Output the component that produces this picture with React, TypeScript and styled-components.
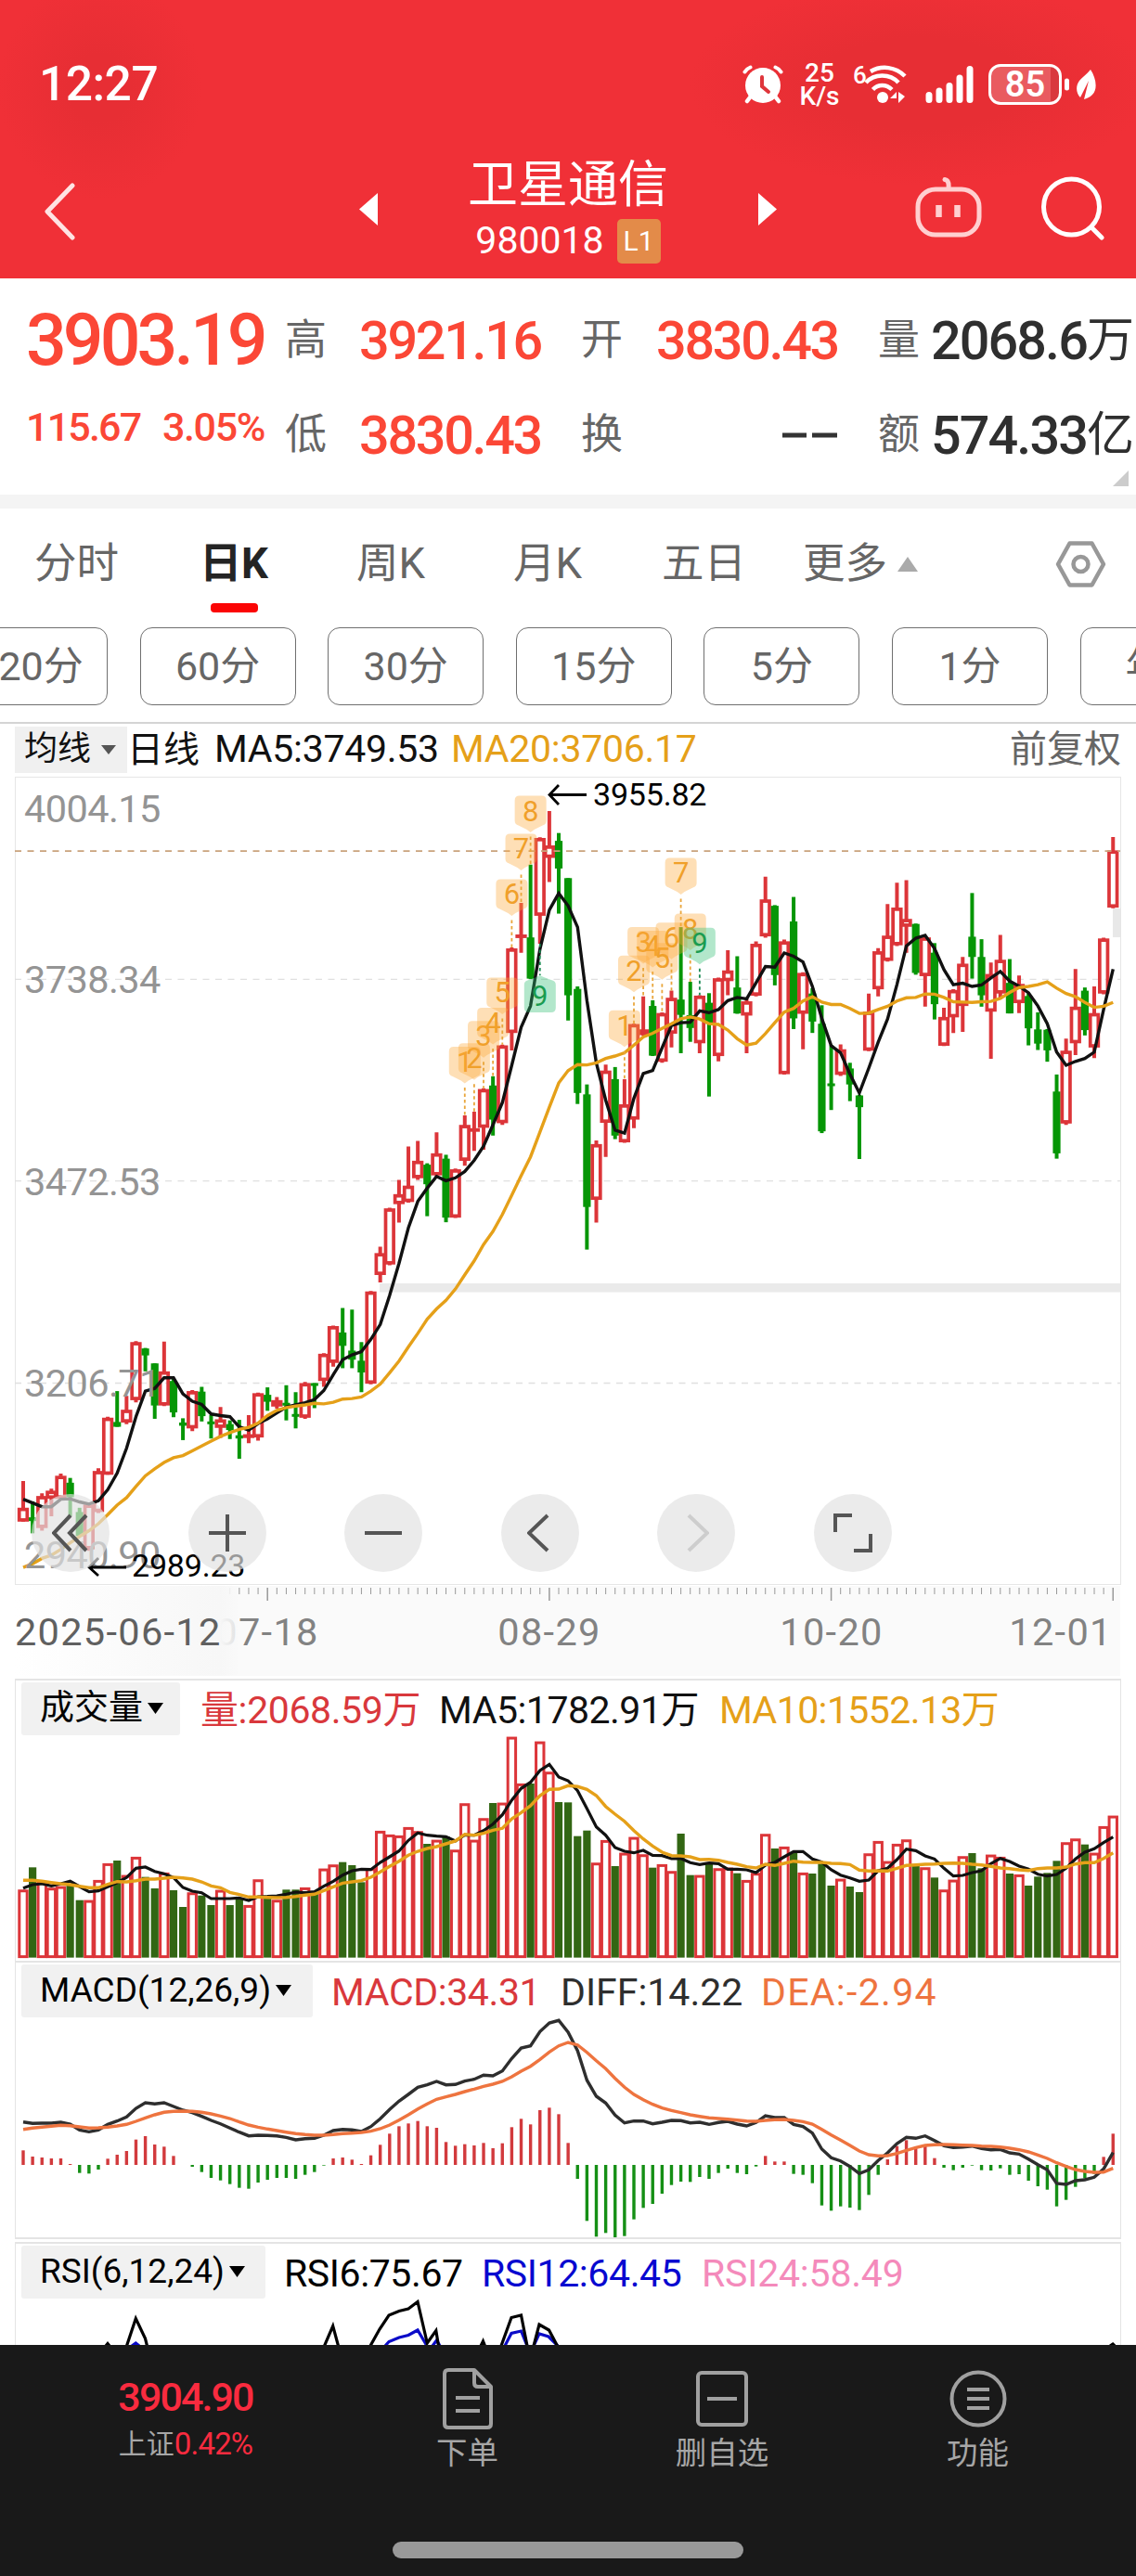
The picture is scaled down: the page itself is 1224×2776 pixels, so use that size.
import React from "react";
import styled, { createGlobalStyle, css } from "styled-components";

const sans = `Roboto, "Noto Sans CJK SC", sans-serif`;

const GlobalStyle = createGlobalStyle`
  body { margin: 0; background: #fff; font-family: ${sans}; }
  * { box-sizing: border-box; }
  svg { display: block; }
`;

/* ---------- series data ---------- */

const START_X = 25;
const STEP = 10.123;
const xAt = (i: number) => START_X + STEP * i;

type Candle = { up: boolean; high: number; top: number; bottom: number; low: number };
const TOP = 820;

// Rows are "r|g high top bottom low", measured from TOP in steps of 1/unit px.
const readCandles = (text: string, unit: number): Candle[] =>
  text
    .trim()
    .split(",")
    .map((row) => {
      const [c, ...n] = row.trim().split(" ");
      const [high, top, bottom, low] = n.map((v) => TOP + Number(v) / unit);
      return { up: c === "r", high, top, bottom, low };
    });

const readLine = (text: string, unit: number, top = TOP) =>
  text.trim().split(/\s+/).map((v) => top + Number(v) / unit);

const candles: Candle[] = [
  ...readCandles(
    `r 1352 1402 1428 1428,g 1390 1420 1427 1450,r 1375 1380 1440 1445,r 1366 1370 1385 1418,r 1338 1342 1385 1386,g 1346 1355 1382 1418,g 1402 1410 1455 1456,r 1394 1396 1480 1483,r 1328 1333 1410 1412,r 1231 1233 1340 1340,g 1183 1241 1250 1250,r 1192 1218 1242 1245,r 1089 1091 1200 1204,g 1102 1103 1116 1146,g 1131 1131 1210 1235,r 1090 1146 1210 1211,g 1160 1164 1223 1232,g 1234 1242 1248 1275,r 1181 1183 1253 1258,g 1175 1184 1230 1240,g 1228 1240 1245 1272,r 1213 1236 1252 1271,g 1238 1245 1256 1273,g 1237 1266 1272 1310,r 1228 1264 1271 1281,r 1186 1187 1270 1276,g 1176 1190 1203 1220,r 1194 1200 1212 1216,g 1172 1205 1210 1238,g 1185 1226 1231 1253,r 1166 1168 1233 1235,g 1168 1168 1173 1215,r 1112 1113 1164 1175,r 1060 1061 1130 1137,g 1027 1073 1098 1140,g 1030 1107 1124 1140,g 1091 1126 1148 1185,r 995 996 1169 1170,r 912 924 965 979`,
    1.742
  ),
  ...readCandles(
    `r 1258 1260 1418 1420,r 1180 1220 1248 1300,r 1086 1196 1242 1244,r 1070 1126 1175 1180,g 1133 1137 1192 1282,r 1046 1105 1167 1172,g 1109 1120 1286 1299,r 1148 1150 1286 1287,r 998 1025 1126 1140,r 988 1036 1042 1098,r 922 924 1033 1095,g 888 914 1010 1055,r 799 801 1020 1025,r 525 528 766 815,r 400 490 497 540,g 292 497 613 614,r 215 217 436 515,r 141 238 273 341,g 203 225 303 430,g 330 330 660 731,g 635 642 935 966,g 911 939 1256 1376,r 1069 1079 1236 1300,r 855 872 1019 1115,g 862 896 1055 1065,r 896 967 1074 1075,r 740 741 1010 1034,r 663 756 772 774,g 674 690 830 831,r 708 710 847 850,r 647 667 768 807,g 468 672 715 823,g 622 716 752 791,r 660 661 795 823,g 654 681 740 945,r 610 612 831 846,r 533 590 620 660,g 550 638 711 712,r 670 677 717 823,r 508 515 661 663,r 326 390 494 498,g 406 408 603 632,r 503 508 882 883,g 383 452 725 755,r 595 597 712 812,g 640 655 734 766,g 688 740 1043 1048,g 800 908 915 983,r 798 812 884 887,g 850 866 911 958,g 940 942 975 1121,r 655 706 816 817,r 527 536 643 663,r 403 492 563 565,r 343 413 519 521,r 336 445 467 540,g 458 459 597 602,r 495 497 606 692,g 513 540 685 728,r 695 721 802 803,r 643 645 722 766,r 552 571 690 763,g 372 495 552 613,g 502 552 660 692,r 568 600 706 839,r 490 560 655 670,g 558 625 711 711,r 604 628 682 710,g 655 662 753 801,g 708 756 796 814,g 755 757 815 847,g 883 931 1105 1120,r 782 816 1021 1025,r 586 692 795 828,g 638 647 758 773,r 635 710 807 837,r 498 500 655 657,r 214 252 413 415`,
    2.613
  ),
];

const ma5 = [
  ...readLine(
    `1386 1393 1400 1400 1386 1385 1391 1395 1389 1368 1337 1290 1231 1183 1178 1158 1158 1188 1202 1208 1226 1229 1231 1250 1256 1244 1235 1224 1213 1209 1205 1199 1182 1152 1124 1115 1109 1086 1058`,
    1.742
  ),
  ...readLine(
    `1505 1415 1315 1240 1203 1170 1182 1174 1156 1125 1085 1025 962 857 750 690 530 420 373 408 468 675 850 955 1040 1048 950 880 872 808 745 737 736 704 709 700 675 666 670 625 579 581 541 550 566 635 725 802 822 882 935 865 792 727 630 521 499 491 528 588 630 626 635 631 611 593 620 634 653 690 740 820 857 846 838 820 700 586`,
    2.613
  ),
];

const ma20 = [
  ...readLine(
    `1514 1507 1497 1491 1480 1468 1456 1445 1432 1415 1397 1383 1362 1342 1329 1317 1308 1304 1295 1286 1277 1268 1261 1255 1251 1243 1229 1219 1214 1211 1209 1206 1207 1204 1198 1197 1194 1183 1170`,
    1.742
  ),
  ...readLine(
    `1723 1690 1650 1612 1572 1543 1519 1487 1447 1408 1362 1325 1277 1223 1168 1115 1045 975 907 872 855 856 850 838 831 822 800 777 767 753 740 726 721 727 740 742 758 782 800 795 768 737 707 697 676 664 679 686 686 697 711 710 700 691 676 667 666 656 657 666 678 679 680 678 677 669 652 638 635 630 622 640 655 664 680 694 691 680`,
    2.613
  ),
];

const volume = readLine(
  `709 637 683 703 698 695 743 743 678 624 615 662 603 668 705 654 711 765 718 728 759 710 759 738 759 676 735 742 709 709 702 720 641 628 620 630 685 640 519 531 534 507 520 561 548 537 580 430 548 478 429 428 215 366 366 230 328 426 427 536 518 622 549 633 590 539 595 638 627 649 528 662 662 622 640 638 656 678 655 529 576 570 590 654 657 625 696 674 699 717 592 552 617 561 547 630 637 670 709 677 601 591 640 596 603 657 660 696 667 655 616 556 544 563 590 504 470`,
  3,
  1800
);
const volumeMa5 = readLine(
  `704 693 690 697 690 682 699 716 713 700 686 670 640 636 650 658 670 702 714 719 738 738 738 736 744 732 731 729 724 717 719 716 698 682 662 648 643 644 621 603 584 550 526 533 536 538 552 532 533 518 497 467 420 382 362 324 304 345 357 389 447 506 533 573 585 590 582 598 599 609 608 622 628 623 625 643 643 645 654 630 621 603 586 586 610 620 645 662 671 682 678 648 640 612 578 583 600 610 640 665 663 654 648 625 608 618 633 643 659 665 660 640 610 588 577 557 539`,
  3,
  1800
);
const volumeMa10 = readLine(
  `679 679 682 686 690 693 698 703 703 692 683 684 680 675 675 672 669 671 675 684 697 703 718 725 733 733 734 735 734 731 727 724 712 700 688 684 680 669 652 634 617 598 585 576 570 561 552 530 533 527 517 511 480 460 438 405 385 384 373 376 385 405 440 465 488 518 545 568 588 599 600 603 612 611 614 621 627 635 639 627 631 624 617 620 621 621 624 625 628 646 649 648 649 640 631 629 627 626 624 623 624 627 629 634 639 641 645 647 641 639 639 636 626 622 622 608 590`,
  3,
  1800
);

const macd = readLine(
  `622 642 645 648 648 666 695 697 684 649 636 624 587 576 603 610 640 669 675 692 711 719 731 743 746 726 717 711 711 714 701 692 671 648 645 652 666 638 604 568 544 535 527 544 549 595 607 602 606 598 615 599 547 520 538 492 484 505 598 714 850 901 889 908 899 845 808 795 762 734 723 724 708 714 695 681 695 699 674 640 658 658 698 701 728 800 817 803 807 815 766 701 651 608 589 615 607 647 678 686 678 671 686 687 680 701 699 720 738 749 803 782 740 713 698 643 568`,
  3,
  2110
);
const diff = readLine(
  `530 535 534 534 531 537 556 562 556 538 527 514 486 468 472 468 480 492 500 512 525 536 550 563 575 573 574 575 580 588 584 583 573 558 554 556 561 545 520 490 463 441 418 410 399 410 409 398 392 379 381 365 325 291 284 238 210 202 240 300 395 447 469 508 533 527 527 536 531 525 526 533 531 538 532 528 537 543 532 510 516 516 538 545 566 618 646 656 674 697 685 655 630 600 580 583 575 590 607 613 611 608 616 620 619 630 634 650 668 685 729 732 720 717 709 682 629`,
  3,
  2110
);
const dea = readLine(
  `554 550 547 544 541 542 546 550 549 547 543 538 528 517 507 499 496 495 496 499 504 511 519 530 540 547 553 558 563 568 571 573 573 571 568 566 564 560 552 540 524 507 488 472 457 449 441 432 424 415 408 399 384 366 350 328 304 284 273 281 305 332 358 389 418 441 458 473 485 493 500 507 512 517 519 521 524 527 528 525 523 522 525 529 537 554 572 589 606 624 636 640 639 632 622 613 606 604 603 604 605 606 608 609 611 615 620 627 637 648 662 674 684 690 693 692 680`,
  3,
  2110
);

const toPoints = (ys: number[]) => ys.map((y, i) => `${xAt(i).toFixed(1)},${y.toFixed(1)}`).join(" ");

/* ---------- shared pieces ---------- */

const Screen = styled.main`
  width: 1224px;
  height: 2776px;
  display: flex;
  flex-direction: column;
  overflow: hidden;
  background: #fff;
`;

type TextProps = { $size: number; $color?: string; $weight?: number; $track?: number; $width?: number };
const Label = styled.span<TextProps>`
  flex: none;
  font-size: ${(p) => p.$size}px;
  line-height: 1.2;
  font-weight: ${(p) => p.$weight ?? 400};
  color: ${(p) => p.$color ?? "inherit"};
  letter-spacing: ${(p) => p.$track ?? 0}px;
  white-space: nowrap;
  ${(p) => p.$width !== undefined && css`width: ${p.$width}px;`}
`;

/* ---------- header ---------- */

const Header = styled.header`
  flex: none;
  height: 300px;
  color: #fff;
  background: radial-gradient(ellipse 110px 120px at 108px 95px, #e72e34 30%, rgba(231, 46, 52, 0) 100%),
    radial-gradient(ellipse 250px 110px at 992px 90px, #e72e34 45%, rgba(231, 46, 52, 0) 100%), #f03037;
`;

const StatusBar = styled.div`
  height: 150px;
  padding: 31px 43px 0 42px;
  display: flex;
  align-items: center;
  justify-content: space-between;
`;

const StatusIcons = styled.div`
  display: flex;
  align-items: center;
`;

const Speed = styled.div`
  width: 44px;
  margin: 0 15px 0 17px;
  display: flex;
  flex-direction: column;
  align-items: center;
  font-size: 28px;
  line-height: 25px;
  font-weight: 500;
`;

const BatteryBody = styled.div`
  width: 79px;
  height: 44px;
  margin-left: 15px;
  border: 3.5px solid #fff;
  border-radius: 13px;
  display: flex;
  align-items: center;
  justify-content: center;
  background: linear-gradient(90deg, #e95b60 88%, #d9383e 88%);
  font-size: 38px;
  line-height: 38px;
  font-weight: 600;
`;

const TitleBar = styled.div`
  height: 150px;
  display: grid;
  grid-template-columns: 387px 20px 410px 20px 149px 72px 64px 70px;
  align-items: center;
`;

const BackSlot = styled.div`
  padding: 6px 0 0 46px;
`;

const TitleStack = styled.div`
  display: flex;
  flex-direction: column;
  align-items: center;
  padding-top: 6px;
`;

const TitleLine = styled.div<{ $drop?: number }>`
  height: 62px;
  padding-top: ${(p) => p.$drop ?? 0}px;
  display: flex;
  align-items: center;
  gap: 14px;
`;

const LevelBadge = styled.span`
  width: 47px;
  height: 48px;
  border-radius: 5px;
  background: #e38b49;
  font-size: 30px;
  line-height: 48px;
  text-align: center;
`;

const AlarmIcon = () => (
  <svg width="44" height="42" viewBox="0 0 44 42" fill="none" stroke="#fff" strokeLinecap="round">
    <path d="M2.5 7.5Q4.5 4 8.500 2.500M41.500 7.500Q39.500 4 35.500 2.500" strokeWidth="4" />
    <path d="M8 35L5 39M36 35L39 39" strokeWidth="4.500" />
    <circle cx="22" cy="22" r="19" fill="#fff" stroke="none" />
    <path d="M21 13V23L28 29" stroke="#df353b" strokeWidth="4" />
  </svg>
);

const WifiIcon = () => (
  <svg width="57" height="46" viewBox="0 0 57 46" fill="none" stroke="#fff" strokeWidth="4.500">
    <text x="-1" y="22" fontSize="26" fontWeight="500" fill="#fff" stroke="none">6</text>
    <path d="M18 9C30 2 45 4 55 14" />
    <path d="M13 21C22 11 39 11 48 21" />
    <path d="M20.500 28.500C26 22.500 35 22.500 41 28.500" />
    <circle cx="31" cy="37" r="6" fill="#fff" stroke="none" />
    <path d="M39 38H46V43V31L39 38ZM48 31V43L55 36Z" fill="#fff" stroke="none" />
  </svg>
);

const SignalIcon = () => (
  <svg width="53" height="42" viewBox="0 0 53 42" stroke="#fff" strokeWidth="7" strokeLinecap="round">
    <path d="M4 32.500V37.500M15 28V37.500M26 22.500V37.500M37 14V37.500M48 4.500V37.500" />
  </svg>
);

const IconPair = styled.div`
  display: flex;
  align-items: center;
  gap: 20px;
`;

const LeafIcon = () => (
  <svg width="22" height="34" viewBox="0 0 22 34">
    <path d="M16 1C22 10 24 22 18 28C15 31 12 32 9 33L14 13L5 31C0 26 0 18 4 13C7 9 12 6 16 1Z" fill="#fff" />
  </svg>
);

const Triangle = ({ w, h, d, fill }: { w: number; h: number; d: "left" | "right" | "up" | "down"; fill: string }) => {
  const shapes = {
    left: `M${w} 0V${h}L0 ${h / 2}Z`,
    right: `M0 0V${h}L${w} ${h / 2}Z`,
    up: `M0 ${h}H${w}L${w / 2} 0Z`,
    down: `M0 0H${w}L${w / 2} ${h}Z`,
  };
  return (
    <svg width={w} height={h}>
      <path d={shapes[d]} fill={fill} />
    </svg>
  );
};

/* ---------- quote ---------- */

const Quote = styled.section`
  flex: none;
  height: 233px;
  padding: 2px 0 0 28px;
  display: grid;
  grid-template-columns: 279px 80px 239px 81px 239px 57px 1fr;
  grid-template-rows: 130px 74px 27px;
  align-items: center;
`;

const Change = styled.div`
  display: flex;
  margin-bottom: 16px;
`;

const Amount = styled.div`
  display: flex;
  align-items: center;
`;

const RightValue = styled.div`
  width: 196px;
`;

const Corner = styled.div`
  grid-column: 7;
  padding: 0 0 8px 196px;
`;

const Strip = styled.div`
  flex: none;
  height: 15px;
  background: #f4f4f4;
`;

/* ---------- tabs ---------- */

const Tabs = styled.nav`
  flex: none;
  height: 120px;
  padding-left: 37px;
  display: grid;
  grid-template-columns: 178px 169px 169px 160px 152px 272px 57px;
`;

const Tab = styled.div<{ $active?: boolean }>`
  position: relative;
  display: flex;
  align-items: center;
  gap: 11px;
  font-size: 45.500px;
  line-height: 54px;
  white-space: nowrap;
  font-weight: ${(p) => (p.$active ? 700 : 400)};
  color: ${(p) => (p.$active ? "#242424" : "#666")};
  ${(p) =>
    p.$active &&
    css`
      letter-spacing: -0.5px;
      &::after {
        content: "";
        position: absolute;
        left: 12px;
        top: 102px;
        width: 51px;
        height: 10px;
        border-radius: 4px;
        background: #fb0505;
      }
    `}
`;

const Periods = styled.div`
  flex: none;
  height: 112px;
  padding-top: 8px;
  border-bottom: 2px solid #d4d4d4;
  display: flex;
  gap: 34.600px;
  overflow: hidden;
`;

const Pill = styled.div`
  flex: none;
  width: 168px;
  height: 84px;
  border: 1.500px solid #6f6f6f;
  border-radius: 13px;
  display: flex;
  align-items: center;
  justify-content: center;
  font-size: 43px;
  line-height: 52px;
  color: #666;
  &:first-child {
    margin-left: -52px;
  }
`;

/* ---------- charts ---------- */

const MaLegend = styled.div`
  flex: none;
  height: 57px;
  padding: 3px 16px 4px 16px;
  display: flex;
  align-items: center;
`;

const MaPicker = styled.button`
  width: 121px;
  height: 50px;
  padding: 0 0 0 10px;
  border: 0;
  background: #f0f0f0;
  display: flex;
  align-items: center;
  gap: 11px;
  font-family: inherit;
`;

const Push = styled.div`
  display: flex;
  margin-left: auto;
`;

const ChartArea = styled.div`
  position: relative;
  flex: none;
  height: 872px;
`;

const Controls = styled.div`
  position: absolute;
  left: 34px;
  top: 773px;
  display: flex;
  gap: 84.500px;
`;

const RoundButton = styled.button`
  width: 84px;
  height: 84px;
  padding: 0;
  border: 0;
  border-radius: 50%;
  background: rgba(226, 226, 226, 0.68);
  display: flex;
  align-items: center;
  justify-content: center;
`;

const Axis = styled.div`
  flex: none;
  height: 100px;
`;

const Panel = styled.section<{ $height: number }>`
  flex: none;
  height: ${(p) => p.$height}px;
  margin: 0 16px;
  border: 1px solid #e4e4e4;
  border-top-width: 2px;
  border-bottom-width: 0;
`;

const PanelLegend = styled.div`
  height: 60px;
  padding: 2px 0 0 6px;
  display: flex;
  align-items: flex-start;
`;

const IndicatorPicker = styled.button<{ $width: number; $space: number }>`
  flex: none;
  width: ${(p) => p.$width}px;
  height: 57px;
  margin-right: ${(p) => p.$space}px;
  padding: 0 0 1px 20px;
  border: 0;
  border-radius: 3px;
  background: #f1f1f1;
  display: flex;
  align-items: center;
  gap: 5px;
  font-family: inherit;
`;

const PanelValues = styled.div`
  height: 62px;
  display: flex;
  align-items: center;
`;

const PanelGap = styled.div`
  flex: none;
  height: 5px;
  margin: 0 16px;
  border-top: 2px solid #e4e4e4;
`;

const badges: [string, number, number, boolean?][] = [
  ["1", 47, 805],
  ["2", 48, 795],
  ["3", 49, 732],
  ["4", 50, 695],
  ["5", 51, 610],
  ["6", 52, 333],
  ["7", 53, 205],
  ["8", 54, 98],
  ["1", 64, 702],
  ["2", 65, 548],
  ["3", 66, 468],
  ["4", 67, 478],
  ["5", 68, 513],
  ["6", 69, 455],
  ["7", 70, 273],
  ["8", 71, 430],
  ["9", 72, 470, true],
];

const Badge = ({ n, i, top, green }: { n: string; i: number; top: number; green?: boolean }) => {
  const x = xAt(i);
  const y = TOP + top / 2.613;
  return (
    <g>
      <line x1={x} x2={x} y1={y + 44} y2={candles[i].high} stroke={green ? "#198a52" : "#e9a63c"} strokeWidth="1.800" strokeDasharray="3.500 3" />
      <path
        d={`M${x - 12} ${y}h24q5 0 5 5v22q0 4 -4 5l-9 4.500l-4 3l-4 -3l-9 -4.500q-4 -1 -4 -5v-22q0 -5 5 -5z`}
        fill={green ? "#2fbf71" : "#fba73a"}
        fillOpacity="0.370"
      />
      <text x={x} y={y + 27} textAnchor="middle" fontSize="31" fill={green ? "#1a9c50" : "#f0a02a"}>{n}</text>
    </g>
  );
};

const priceLabels: [string, number][] = [
  ["4004.15", 886],
  ["3738.34", 1070],
  ["3472.53", 1288],
  ["3206.71", 1505],
  ["2940.90", 1690],
];

const PriceChart = () => (
  <svg width="1224" height="872" viewBox="0 837 1224 872">
    <rect x="16.500" y="837.500" width="1191" height="870" fill="none" stroke="#e6e6e6" />
    {[1055.4, 1272.6, 1490.5].map((y) => (
      <line key={y} x1="16" x2="1207" y1={y} y2={y} stroke="#e0e0e0" strokeWidth="1.300" strokeDasharray="7 6.500" />
    ))}
    <rect x="409" y="1383" width="798" height="9.500" fill="#eaeaea" />
    <rect x="1199" y="979" width="8" height="31" fill="#e8e8e8" />
    {candles.map((c, i) => {
      const x = xAt(i);
      const h = c.bottom - c.top;
      return c.up ? (
        <g key={i} stroke="#dc3539" fill="none">
          <path d={`M${x} ${c.high}V${c.top + 1}M${x} ${c.bottom - 1}V${c.low}`} strokeWidth="4" />
          <rect x={x - 4.3} y={c.top + Math.min(1.8, h / 2)} width="8.600" height={Math.max(h - 3.6, 0.2)} strokeWidth="3.700" />
        </g>
      ) : (
        <g key={i} fill="#069606">
          <rect x={x - 2} y={c.high} width="4" height={c.low - c.high} />
          <rect x={x - 4.1} y={c.top} width="8.200" height={Math.max(h, 3)} />
        </g>
      );
    })}
    <line x1="16" x2="1207" y1="917.200" y2="917.200" stroke="#c9a27c" strokeWidth="1.800" strokeDasharray="7 6.500" />
    <polyline points={toPoints(ma5)} fill="none" stroke="#111" strokeWidth="3.400" />
    <polyline points={toPoints(ma20)} fill="none" stroke="#e5a019" strokeWidth="3.400" />
    {priceLabels.map(([t, y]) => (
      <text key={t} x="26" y={y} fontSize="41.500" letterSpacing="-0.600" fill="#949494">{t}</text>
    ))}
    {badges.map(([n, i, top, green]) => (
      <Badge key={i} n={n} i={i} top={top} green={green} />
    ))}
    <line x1={xAt(55)} x2={xAt(55)} y1="1017" y2="1051" stroke="#198a52" strokeWidth="1.800" strokeDasharray="3.500 3" />
    <path d="M569.800 1056l8 -3l4 -2l4 2l8 3q5 1 5 5v25q0 5 -5 5h-24q-5 0 -5 -5v-25q0 -4 5 -5z" fill="#2fbf71" fillOpacity="0.370" />
    <text x="581.800" y="1084" textAnchor="middle" fontSize="31" fill="#1a9c50">9</text>
    <g stroke="#000" strokeWidth="2.800" fill="none">
      <path d="M632 856.500H592M602 846L592 856.500L602 867" />
      <path d="M136 1689H96M106 1679L96 1689L106 1698" />
    </g>
    <text x="639" y="868" fontSize="34" letterSpacing="-0.200" fill="#000">3955.82</text>
    <text x="142" y="1698.500" fontSize="34" letterSpacing="-0.200" fill="#000">2989.23</text>
  </svg>
);

const dates: [string, number][] = [
  ["07-18", 288],
  ["08-29", 592],
  ["10-20", 896],
  ["12-01", 1143],
];

const DateAxis = () => (
  <svg width="1224" height="100" viewBox="0 1709 1224 100">
    <defs>
      <linearGradient id="fade" x1="0" x2="1" y1="0" y2="0">
        <stop offset="0" stopColor="#fff" />
        <stop offset="0.92" stopColor="#f7f7f7" />
        <stop offset="1" stopColor="#f9f9f9" stopOpacity="0.8" />
      </linearGradient>
    </defs>
    <rect x="16" y="1709" width="1191" height="97" fill="#fafafa" />
    {candles.map((_, i) => (
      <line key={i} x1={xAt(i)} x2={xAt(i)} y1="1711" y2={i % 30 === 26 ? 1725 : 1718} stroke="#999" strokeWidth={i % 30 === 26 ? 1.5 : 1} />
    ))}
    {dates.map(([t, x]) => (
      <text key={t} x={x} y="1773" textAnchor="middle" fontSize="41.500" letterSpacing="1.300" fill="#828282">{t}</text>
    ))}
    <rect x="16" y="1709" width="240" height="97" fill="url(#fade)" />
    <text x="16" y="1773" fontSize="41.500" letterSpacing="1.300" fill="#606060">2025-06-12</text>
  </svg>
);

const VolumeChart = () => (
  <svg width="1190" height="240" viewBox="17 1871 1190 240">
    {volume.map((y, i) => {
      const x = xAt(i);
      return candles[i].up ? (
        <rect key={i} x={x - 4.2} y={y + 1.4} width="8.400" height={2108.6 - y - 1.4} fill="#fff" stroke="#dc3539" strokeWidth="3" />
      ) : (
        <rect key={i} x={x - 4.1} y={y} width="8.200" height={2109.6 - y} fill="#326613" />
      );
    })}
    <polyline points={toPoints(volumeMa5)} fill="none" stroke="#111" strokeWidth="3.200" />
    <polyline points={toPoints(volumeMa10)} fill="none" stroke="#e5a019" strokeWidth="3.400" />
  </svg>
);

const ZERO = 2333;
const MacdChart = () => (
  <svg width="1190" height="240" viewBox="17 2175 1190 240">
    {macd.map((y, i) => (
      <rect key={i} x={xAt(i) - 1.7} y={Math.min(y, ZERO)} width="3.400" height={Math.abs(y - ZERO)} fill={y < ZERO ? "#d23a3d" : "#158f15"} />
    ))}
    <polyline points={toPoints(diff)} fill="none" stroke="#2e2e2e" strokeWidth="3.400" />
    <polyline points={toPoints(dea)} fill="none" stroke="#ee743f" strokeWidth="3.400" />
  </svg>
);

const RsiChart = () => (
  <svg width="1190" height="49" viewBox="17 2478 1190 49">
    <g fill="none" strokeWidth="3.200" strokeLinejoin="miter">
      <path
        stroke="#0b0bc8"
        d="M142 2528L146.300 2525L150 2528M415 2528L419 2523.500L430 2519L440 2516.500L450 2511L460 2528M466 2528L470.500 2522L474 2528M544 2528L551 2514.500L561.500 2512L568 2528M575 2528L581 2515L591 2518L601 2528"
      />
      <path
        stroke="#000"
        d="M114 2528L116 2525.500L118 2528M136.500 2528L146.300 2498.500L156.500 2520L158.500 2528M349.500 2528L358.700 2506.500L364.500 2528M399 2528L409 2510L419 2495L430 2490.500L440 2488L450 2480.500L460.300 2525L469.800 2511.500L472.500 2528M518 2528L520.500 2523L522.500 2528M540 2528L551 2497.500L561.500 2495L568 2528M575 2528L581 2505L591.500 2511L600.500 2528M1196 2528L1199 2526L1201 2528"
      />
    </g>
  </svg>
);

/* ---------- bottom bar ---------- */

const BottomBar = styled.footer`
  flex: none;
  height: 249px;
  background: #191919;
  color: #a6a6a6;
`;

const BottomItems = styled.div`
  height: 212px;
  padding-left: 76px;
  display: grid;
  grid-template-columns: 248px 359px 190px 361px;
`;

const BottomItem = styled.div`
  display: flex;
  flex-direction: column;
  align-items: center;
  padding-top: 24px;
`;

const IndexItem = styled(BottomItem)`
  padding-top: 31px;
  color: #f92b3f;
`;

const IndexSub = styled.div`
  height: 48px;
  display: flex;
  align-items: center;
`;

const Caption = styled.span`
  margin-top: 2px;
  font-size: 33.500px;
  line-height: 46px;
`;

const HomeBar = styled.div`
  width: 378px;
  height: 18px;
  margin: 0 auto;
  border-radius: 9px;
  background: #999;
`;

/* ---------- app ---------- */

const RED = "#fb4736";
const INK = "#2f2f2f";
const GREY = "#666";

export default function App() {
  return (
    <Screen>
      <GlobalStyle />
      <Header>
        <StatusBar>
          <Label $size={51.5} $weight={500} $track={-0.5}>12:27</Label>
          <StatusIcons>
            <AlarmIcon />
            <Speed>
              <span>25</span>
              <span>K/s</span>
            </Speed>
            <IconPair>
              <WifiIcon />
              <SignalIcon />
            </IconPair>
            <BatteryBody>85</BatteryBody>
            <svg width="15" height="14" viewBox="0 0 15 14">
              <path d="M5.500 3V11" stroke="#fff" strokeWidth="5" strokeLinecap="round" />
            </svg>
            <LeafIcon />
          </StatusIcons>
        </StatusBar>
        <TitleBar>
          <BackSlot>
            <svg width="37" height="64" viewBox="0 0 37 64" fill="none" stroke="#ffe3e3" strokeWidth="5" strokeLinecap="round" strokeLinejoin="round">
              <path d="M32 4L5 32L32 60" />
            </svg>
          </BackSlot>
          <Triangle w={20} h={35} d="left" fill="#fff" />
          <TitleStack>
            <TitleLine $drop={6}>
              <Label $size={54}>卫星通信</Label>
            </TitleLine>
            <TitleLine $drop={1}>
              <Label $size={41}>980018</Label>
              <LevelBadge>L1</LevelBadge>
            </TitleLine>
          </TitleStack>
          <Triangle w={20} h={35} d="right" fill="#fff" />
          <span />
          <svg width="72" height="76" viewBox="0 0 72 76" fill="none" stroke="#ffcfd0" strokeWidth="5">
            <rect x="3" y="17" width="66" height="49" rx="19" />
            <path d="M32 6.500C36 7 36.500 11 36 16" strokeLinecap="round" />
            <path d="M25.500 34V47M45.500 34V47" strokeWidth="6.500" />
          </svg>
          <span />
          <svg width="70" height="70" viewBox="0 0 70 70" fill="none" stroke="#fff" strokeWidth="5">
            <circle cx="32.500" cy="33" r="30" />
            <path d="M54 55L65 66" strokeLinecap="round" />
          </svg>
        </TitleBar>
      </Header>

      <Quote>
        <Label $size={77} $weight={500} $color={RED} $track={-3.9}>3903.19</Label>
        <Label $size={45} $color={GREY}>高</Label>
        <Label $size={57.5} $weight={500} $color={RED} $track={-2.3}>3921.16</Label>
        <Label $size={45} $color={GREY}>开</Label>
        <Label $size={57.5} $weight={500} $color={RED} $track={-2.3}>3830.43</Label>
        <Label $size={45} $color={GREY}>量</Label>
        <Amount>
          <Label $size={57.5} $weight={500} $color={INK} $track={-1.9} $width={168}>2068.6</Label>
          <Label $size={51} $color={INK}>万</Label>
        </Amount>
        <Change>
          <Label $size={43} $weight={500} $color={RED} $track={-1.8} $width={147}>115.67</Label>
          <Label $size={43} $weight={500} $color={RED} $track={-1.4}>3.05%</Label>
        </Change>
        <Label $size={45} $color={GREY}>低</Label>
        <Label $size={57.5} $weight={500} $color={RED} $track={-2.3}>3830.43</Label>
        <Label $size={45} $color={GREY}>换</Label>
        <RightValue>
          <svg width="196" height="6">
            <path d="M136 3H162M168 3H195" stroke="#333" strokeWidth="5" />
          </svg>
        </RightValue>
        <Label $size={45} $color={GREY}>额</Label>
        <Amount>
          <Label $size={57.5} $weight={500} $color={INK} $track={-1.9} $width={168}>574.33</Label>
          <Label $size={51} $color={INK}>亿</Label>
        </Amount>
        <Corner>
          <svg width="18" height="17">
            <path d="M17 0V17H0Z" fill="#ccc" />
          </svg>
        </Corner>
      </Quote>
      <Strip />

      <Tabs>
        <Tab>分时</Tab>
        <Tab $active>日K</Tab>
        <Tab>周K</Tab>
        <Tab>月K</Tab>
        <Tab>五日</Tab>
        <Tab>
          更多
          <Triangle w={22} h={16} d="up" fill="#aaa" />
        </Tab>
        <Tab>
          <svg width="55" height="52" viewBox="0 0 55 52" fill="none" stroke="#989898" strokeWidth="4.500">
            <path d="M15.500 3.500H39.500L52 26L39.500 48.500H15.500L3 26Z" strokeLinejoin="round" />
            <circle cx="27.500" cy="26" r="8" />
          </svg>
        </Tab>
      </Tabs>
      <Periods>
        {["120分", "60分", "30分", "15分", "5分", "1分", "年K"].map((t) => (
          <Pill key={t}>{t}</Pill>
        ))}
      </Periods>

      <MaLegend>
        <MaPicker>
          <Label $size={36} $color="#111">均线</Label>
          <Triangle w={16} h={10} d="down" fill="#555" />
        </MaPicker>
        <Label $size={39} $color="#111" $width={94}>日线</Label>
        <Label $size={41} $color="#111" $width={255} $track={-0.3}>MA5:3749.53</Label>
        <Label $size={41} $color="#e5a019" $track={-0.3}>MA20:3706.17</Label>
        <Push>
          <Label $size={40} $color={GREY}>前复权</Label>
        </Push>
      </MaLegend>

      <ChartArea>
        <PriceChart />
        <Controls>
          <RoundButton>
            <svg width="40" height="42" fill="none" stroke="#555" strokeWidth="4">
              <path d="M20 2L2 21L20 40M37 2L19 21L37 40" />
            </svg>
          </RoundButton>
          <RoundButton>
            <svg width="40" height="40" stroke="#555" strokeWidth="4">
              <path d="M0 20H40M20 0V40" />
            </svg>
          </RoundButton>
          <RoundButton>
            <svg width="40" height="40" stroke="#555" strokeWidth="4">
              <path d="M0 20H40" />
            </svg>
          </RoundButton>
          <RoundButton>
            <svg width="28" height="42" fill="none" stroke="#555" strokeWidth="4">
              <path d="M22 2L2 21L22 40" />
            </svg>
          </RoundButton>
          <RoundButton>
            <svg width="28" height="42" fill="none" stroke="#cdcdcd" strokeWidth="4">
              <path d="M6 2L26 21L6 40" />
            </svg>
          </RoundButton>
          <RoundButton>
            <svg width="44" height="44" fill="none" stroke="#555" strokeWidth="4">
              <path d="M3 21V3H21M41 23V41H23" />
            </svg>
          </RoundButton>
        </Controls>
      </ChartArea>
      <Axis>
        <DateAxis />
      </Axis>

      <Panel $height={304}>
        <PanelLegend>
          <IndicatorPicker $width={171} $space={22}>
            <Label $size={37} $color="#000">成交量</Label>
            <Triangle w={17} h={12} d="down" fill="#000" />
          </IndicatorPicker>
          <PanelValues>
            <Label $size={41} $color="#d9383c" $width={257} $track={-0.4}>量:2068.59万</Label>
            <Label $size={41} $color="#111" $width={302} $track={-0.5}>MA5:1782.91万</Label>
            <Label $size={41} $color="#e5a019" $track={-0.6}>MA10:1552.13万</Label>
          </PanelValues>
        </PanelLegend>
        <VolumeChart />
      </Panel>
      <Panel $height={298}>
        <PanelLegend>
          <IndicatorPicker $width={314} $space={20}>
            <Label $size={37} $color="#000">MACD(12,26,9)</Label>
            <Triangle w={17} h={12} d="down" fill="#000" />
          </IndicatorPicker>
          <PanelValues>
            <Label $size={41} $color="#d9383c" $width={247} $track={-0.4}>MACD:34.31</Label>
            <Label $size={41} $color="#2e2e2e" $width={216}>DIFF:14.22</Label>
            <Label $size={41} $color="#ee743f" $track={1.3}>DEA:-2.94</Label>
          </PanelValues>
        </PanelLegend>
        <MacdChart />
      </Panel>
      <PanelGap />
      <Panel $height={111}>
        <PanelLegend>
          <IndicatorPicker $width={263} $space={20}>
            <Label $size={37} $color="#000">RSI(6,12,24)</Label>
            <Triangle w={17} h={12} d="down" fill="#000" />
          </IndicatorPicker>
          <PanelValues>
            <Label $size={41} $color="#000" $width={213} $track={-0.4}>RSI6:75.67</Label>
            <Label $size={41} $color="#0808d0" $width={237} $track={-0.4}>RSI12:64.45</Label>
            <Label $size={41} $color="#f48abb" $track={-0.2}>RSI24:58.49</Label>
          </PanelValues>
        </PanelLegend>
        <RsiChart />
      </Panel>

      <BottomBar>
        <BottomItems>
          <IndexItem>
            <Label $size={43} $weight={500} $track={-1.9}>3904.90</Label>
            <IndexSub>
              <Label $size={30} $color="#a6a6a6">上证</Label>
              <Label $size={33} $track={-0.8}>0.42%</Label>
            </IndexSub>
          </IndexItem>
          <BottomItem>
            <svg width="56" height="68" viewBox="0 0 56 68" fill="none" stroke="#a0a0a0" strokeWidth="4">
              <path d="M35 3H7Q3 3 3 7V61Q3 65 7 65H49Q53 65 53 61V21L35 3V17Q35 21 39 21H53" strokeLinejoin="round" />
              <path d="M15 33H41M15 47H41" />
            </svg>
            <Caption>下单</Caption>
          </BottomItem>
          <BottomItem>
            <svg width="58" height="68" viewBox="0 0 58 68" fill="none" stroke="#a0a0a0" strokeWidth="4">
              <rect x="3" y="6" width="52" height="56" rx="4" />
              <path d="M13 34H45" />
            </svg>
            <Caption>删自选</Caption>
          </BottomItem>
          <BottomItem>
            <svg width="62" height="68" viewBox="0 0 62 68" fill="none" stroke="#a0a0a0" strokeWidth="4">
              <circle cx="31" cy="34" r="28.500" />
              <path d="M19 24H43M19 34H43M19 44H43" />
            </svg>
            <Caption>功能</Caption>
          </BottomItem>
        </BottomItems>
        <HomeBar />
      </BottomBar>
    </Screen>
  );
}
